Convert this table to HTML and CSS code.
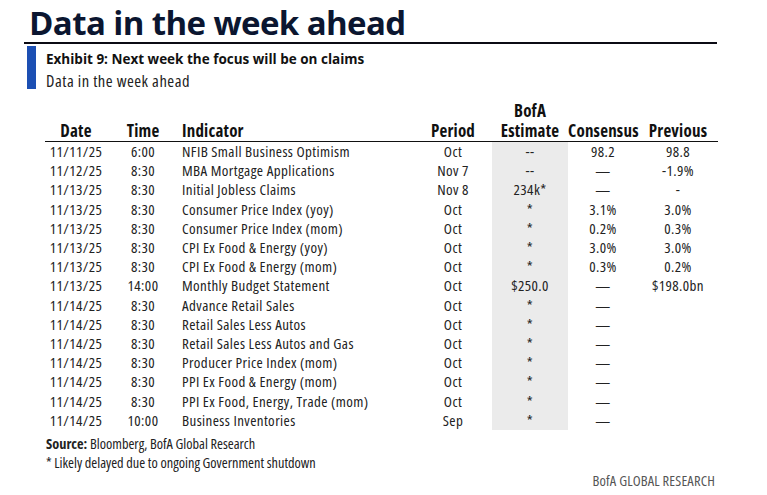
FILE: index.html
```html
<!DOCTYPE html>
<html>
<head>
<meta charset="utf-8">
<link rel="stylesheet" href="styles.css">
</head>
<body>
<div class="page">
  <h1 class="title">Data in the week ahead</h1>
  <div class="exhibit">
    <div class="ex-title">Exhibit 9: Next week the focus will be on claims</div>
    <div class="ex-sub">Data in the week ahead</div>
  </div>
  <table class="data">
    <colgroup>
      <col class="c-date"><col class="c-time"><col class="c-ind"><col class="c-per"><col class="c-est"><col class="c-con"><col class="c-prev">
    </colgroup>
    <thead>
      <tr>
        <th>Date</th><th>Time</th><th class="left">Indicator</th><th>Period</th><th>BofA<br>Estimate</th><th>Consensus</th><th>Previous</th>
      </tr>
    </thead>
    <tbody>
      <tr><td>11/11/25</td><td>6:00</td><td class="left">NFIB Small Business Optimism</td><td>Oct</td><td class="est">--</td><td>98.2</td><td>98.8</td></tr>
      <tr><td>11/12/25</td><td>8:30</td><td class="left">MBA Mortgage Applications</td><td>Nov 7</td><td class="est">--</td><td>—</td><td>-1.9%</td></tr>
      <tr><td>11/13/25</td><td>8:30</td><td class="left">Initial Jobless Claims</td><td>Nov 8</td><td class="est">234k*</td><td>—</td><td>-</td></tr>
      <tr><td>11/13/25</td><td>8:30</td><td class="left">Consumer Price Index (yoy)</td><td>Oct</td><td class="est">*</td><td>3.1%</td><td>3.0%</td></tr>
      <tr><td>11/13/25</td><td>8:30</td><td class="left">Consumer Price Index (mom)</td><td>Oct</td><td class="est">*</td><td>0.2%</td><td>0.3%</td></tr>
      <tr><td>11/13/25</td><td>8:30</td><td class="left">CPI Ex Food &amp; Energy (yoy)</td><td>Oct</td><td class="est">*</td><td>3.0%</td><td>3.0%</td></tr>
      <tr><td>11/13/25</td><td>8:30</td><td class="left">CPI Ex Food &amp; Energy (mom)</td><td>Oct</td><td class="est">*</td><td>0.3%</td><td>0.2%</td></tr>
      <tr><td>11/13/25</td><td>14:00</td><td class="left">Monthly Budget Statement</td><td>Oct</td><td class="est">$250.0</td><td>—</td><td>$198.0bn</td></tr>
      <tr><td>11/14/25</td><td>8:30</td><td class="left">Advance Retail Sales</td><td>Oct</td><td class="est">*</td><td>—</td><td></td></tr>
      <tr><td>11/14/25</td><td>8:30</td><td class="left">Retail Sales Less Autos</td><td>Oct</td><td class="est">*</td><td>—</td><td></td></tr>
      <tr><td>11/14/25</td><td>8:30</td><td class="left">Retail Sales Less Autos and Gas</td><td>Oct</td><td class="est">*</td><td>—</td><td></td></tr>
      <tr><td>11/14/25</td><td>8:30</td><td class="left">Producer Price Index (mom)</td><td>Oct</td><td class="est">*</td><td>—</td><td></td></tr>
      <tr><td>11/14/25</td><td>8:30</td><td class="left">PPI Ex Food &amp; Energy (mom)</td><td>Oct</td><td class="est">*</td><td>—</td><td></td></tr>
      <tr><td>11/14/25</td><td>8:30</td><td class="left">PPI Ex Food, Energy, Trade (mom)</td><td>Oct</td><td class="est">*</td><td>—</td><td></td></tr>
      <tr><td>11/14/25</td><td>10:00</td><td class="left">Business Inventories</td><td>Sep</td><td class="est">*</td><td>—</td><td></td></tr>
    </tbody>
  </table>
  <div class="notes">
    <div class="note"><b>Source:</b> Bloomberg, BofA Global Research</div>
    <div class="note">* Likely delayed due to ongoing Government shutdown</div>
  </div>
  <div class="brand">BofA GLOBAL RESEARCH</div>
</div>
</body>
</html>
```

FILE: styles.css
```css
html, body {
  margin: 0;
  padding: 0;
  background: #ffffff;
}
.page {
  width: 767px;
  height: 495px;
  overflow: hidden;
  font-family: "Open Sans", "DejaVu Sans Condensed", sans-serif;
  font-stretch: 75%;
  color: #222;
}
.title {
  margin: 0 0 0 24px;
  width: 688px;
  padding: 3px 0 0 5px;
  font-family: "Open Sans", "Noto Sans", sans-serif;
  font-stretch: 100%;
  font-weight: 700;
  font-size: 33px;
  line-height: 39px;
  letter-spacing: -0.6px;
  color: #0b1630;
  border-bottom: 2px solid #0b0b14;
}
.exhibit {
  margin: 2px 0 0 27px;
  border-left: 9px solid #1c4fb3;
  padding: 2px 0 0 10px;
  height: 41px;
}
.ex-title {
  font-weight: 700;
  font-stretch: 100%;
  font-size: 13.5px;
  line-height: 22px;
  color: #111;
}
.ex-sub {
  font-size: 16.5px;
  letter-spacing: 0.5px;
  line-height: 21px;
  color: #222;
}
.data {
  margin: 12px 0 0 45px;
  border-collapse: collapse;
  table-layout: fixed;
  width: 673px;
}
.c-date { width: 62px; }
.c-time { width: 72px; }
.c-ind { width: 235px; }
.c-per { width: 78px; }
.c-est { width: 76px; }
.c-con { width: 70px; }
.c-prev { width: 80px; }
.data th {
  font-weight: 700;
  font-size: 17px;
  letter-spacing: 0.2px;
  line-height: 20px;
  color: #111;
  text-align: center;
  vertical-align: bottom;
  padding: 0;
  border-bottom: 1px solid #111;
}
.data td {
  font-size: 15px;
  letter-spacing: 0.4px;
  height: 19.2px;
  line-height: 19.2px;
  padding: 0;
  text-align: center;
  white-space: nowrap;
  color: #222;
}
.data .left {
  text-align: left;
  padding-left: 3px;
}
.data td.est {
  background: #ebebeb;
}
.notes {
  margin: 4px 0 0 46px;
}
.note {
  font-size: 14.3px;
  line-height: 19px;
  color: #222;
}
.brand {
  margin: 0 52px 0 0;
  text-align: right;
  font-size: 14.5px;
  letter-spacing: 0.15px;
  line-height: 17px;
  color: #555;
}
```
